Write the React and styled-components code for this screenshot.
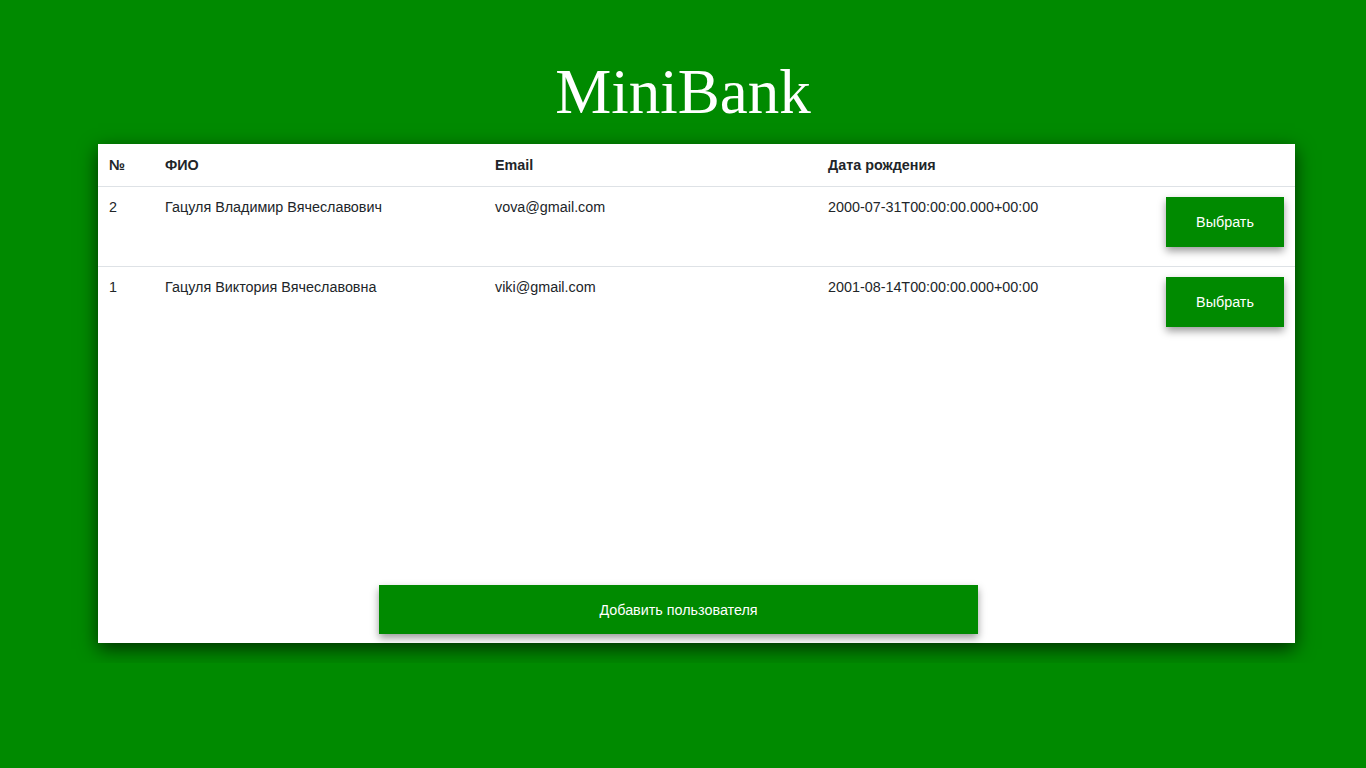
import styled, { createGlobalStyle } from "styled-components";

const GlobalStyle = createGlobalStyle`
  html, body {
    margin: 0;
    padding: 0;
    background: #008a00;
  }
  body {
    font-family: "Liberation Sans", Arial, sans-serif;
  }
`;

const Page = styled.div`
  width: 1382px;
  padding-bottom: 20px;
`;

const Title = styled.h1`
  width: 100vw;
  margin: 57px 0 17px;
  text-align: center;
  font-family: "Liberation Serif", "Times New Roman", serif;
  font-weight: 400;
  font-size: 63px;
  line-height: 70px;
  color: #ffffff;
`;

const Card = styled.div`
  width: 1197px;
  height: 499px;
  margin-left: 98px;
  background: #ffffff;
  box-shadow: 0 6px 18px rgba(0, 0, 0, 0.65);
  display: flex;
  flex-direction: column;
  color: #212529;
  font-size: 14.35px;
`;

const Table = styled.div`
  flex: 1;
`;

const Row = styled.div`
  display: grid;
  grid-template-columns: 56px 330px 333px 338px 140px;
  border-bottom: ${(props) => (props.last ? "none" : "1px solid #dee2e6")};
  font-weight: ${(props) => (props.head ? 700 : 400)};
`;

const Cell = styled.div`
  padding: 10px 11px;
  line-height: 21px;
  text-align: ${(props) => (props.right ? "right" : "left")};
`;

const HeadCell = styled(Cell)`
  line-height: 22px;
`;

const GreenButton = styled.button`
  border: none;
  background: #008a00;
  color: #ffffff;
  font-family: "Liberation Sans", Arial, sans-serif;
  font-size: 14.35px;
  box-shadow: 0 4px 8px rgba(0, 0, 0, 0.4);
  cursor: pointer;
`;

const PickButton = styled(GreenButton)`
  width: 118px;
  height: 50px;
  margin-bottom: 9px;
  display: block;
  margin-left: auto;
`;

const AddButton = styled(GreenButton)`
  width: 599px;
  height: 49px;
  margin: 0 0 9px 281px;
`;

const users = [
  {
    id: 2,
    name: "Гацуля Владимир Вячеславович",
    email: "vova@gmail.com",
    birth: "2000-07-31T00:00:00.000+00:00",
  },
  {
    id: 1,
    name: "Гацуля Виктория Вячеславовна",
    email: "viki@gmail.com",
    birth: "2001-08-14T00:00:00.000+00:00",
  },
];

const App = () => {
  return (
    <>
      <GlobalStyle />
      <Page>
        <Title>MiniBank</Title>
        <Card>
          <Table>
            <Row head>
              <HeadCell>№</HeadCell>
              <HeadCell>ФИО</HeadCell>
              <HeadCell>Email</HeadCell>
              <HeadCell>Дата рождения</HeadCell>
              <HeadCell />
            </Row>
            {users.map((user, i) => (
              <Row key={user.id} last={i === users.length - 1}>
                <Cell>{user.id}</Cell>
                <Cell>{user.name}</Cell>
                <Cell>{user.email}</Cell>
                <Cell>{user.birth}</Cell>
                <Cell right>
                  <PickButton>Выбрать</PickButton>
                </Cell>
              </Row>
            ))}
          </Table>
          <AddButton>Добавить пользователя</AddButton>
        </Card>
      </Page>
    </>
  );
};

export default App;
